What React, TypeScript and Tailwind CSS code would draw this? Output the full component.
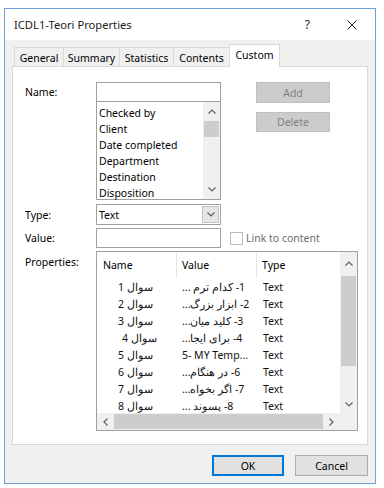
import React from "react";

const ChevUp = () => (
  <svg width="8" height="5" viewBox="0 0 8 5" className="block">
    <polyline points="0.5,4.5 4,1 7.5,4.5" fill="none" stroke="#606060" strokeWidth="1.2" />
  </svg>
);
const ChevDown = () => (
  <svg width="8" height="5" viewBox="0 0 8 5" className="block">
    <polyline points="0.5,0.5 4,4 7.5,0.5" fill="none" stroke="#606060" strokeWidth="1.2" />
  </svg>
);
const ChevLeft = () => (
  <svg width="5" height="8" viewBox="0 0 5 8" className="block">
    <polyline points="4.5,0.5 1,4 4.5,7.5" fill="none" stroke="#606060" strokeWidth="1.2" />
  </svg>
);
const ChevRight = () => (
  <svg width="5" height="8" viewBox="0 0 5 8" className="block">
    <polyline points="0.5,0.5 4,4 0.5,7.5" fill="none" stroke="#606060" strokeWidth="1.2" />
  </svg>
);

const rows = [
  { n: "سوال 1", v: "1- کدام ترم ...", extra: false },
  { n: "سوال 2", v: "2- ابزار بزرگ...", extra: false },
  { n: "سوال 3", v: "3- کلید میان...", extra: false },
  { n: "سوال 4", v: "4- برای ایجا...", extra: true },
  { n: "سوال 5", v: "5- MY Temp...", extra: false },
  { n: "سوال 6", v: "6- در هنگام...", extra: false },
  { n: "سوال 7", v: "7- اگر بخواه...", extra: false },
  { n: "سوال 8", v: "8- پسوند ...", extra: false },
];

const listItems = ["Checked by", "Client", "Date completed", "Department", "Destination", "Disposition"];

export default function App() {
  return (
    <div className="w-[384px] h-[488px] bg-white pt-[8px] pl-[4px] font-['Noto_Sans',sans-serif] text-black text-[10.5px] leading-[14px]">
      <div className="w-[372px] h-[476px] border border-[#6fa3d8] flex flex-col bg-[#f0f0f0]">
        {/* Title bar */}
        <div className="h-[31px] shrink-0 bg-white flex items-center">
          <span className="pl-[9px] text-[11.2px] text-[#1a1a1a]">ICDL1-Teori Properties</span>
          <span className="ml-auto text-[12px] text-[#222]">?</span>
          <svg width="10" height="10" viewBox="0 0 10 10" className="ml-[37px] mr-[18px]">
            <path d="M0.5 0.5 L9.5 9.5 M9.5 0.5 L0.5 9.5" stroke="#222" strokeWidth="1" />
          </svg>
        </div>

        {/* Tabs */}
        <div className="mt-[4px] h-[22px] flex items-end pl-[9px]">
          <div className="w-[49px] h-[19px] border-l border-t border-[#d9d9d9] flex items-center justify-center pt-[1px]">General</div>
          <div className="w-[56px] h-[19px] border-l border-t border-[#d9d9d9] flex items-center justify-center pt-[1px]">Summary</div>
          <div className="w-[54px] h-[19px] border-l border-t border-[#d9d9d9] flex items-center justify-center pt-[1px]">Statistics</div>
          <div className="w-[56px] h-[19px] border-l border-t border-[#d9d9d9] flex items-center justify-center pt-[1px]">Contents</div>
          <div className="relative z-10 -mb-px w-[51px] h-[23px] border-l border-t border-r border-[#d9d9d9] bg-white flex items-center justify-center pb-[2px]">Custom</div>
        </div>

        {/* Panel */}
        <div className="ml-[7px] w-[356px] h-[379px] border border-[#d9d9d9] bg-white pt-[15px]">
          {/* Name row */}
          <div className="flex items-start">
            <div className="w-[83px] pl-[12px] h-[20px] flex items-center">Name:</div>
            <div className="w-[125px] flex flex-col">
              <div className="h-[20px] border border-[#a0a0a0] bg-white"></div>
              <div className="-mt-px h-[99px] border border-[#a0a0a0] bg-white flex">
                <div className="flex-1 pl-[2px] pt-[3px]">
                  {listItems.map((t) => (
                    <div key={t} className="h-[16px] flex items-center">{t}</div>
                  ))}
                </div>
                <div className="w-[17px] bg-[#f0f0f0] flex flex-col">
                  <div className="h-[17px] flex items-center justify-center pt-[2px]"><ChevUp /></div>
                  <div className="mt-[2px] h-[16px] mx-[1px] bg-[#cdcdcd]"></div>
                  <div className="flex-1"></div>
                  <div className="h-[17px] flex items-center justify-center pb-[2px]"><ChevDown /></div>
                </div>
              </div>
            </div>
            <div className="ml-[35px] flex flex-col">
              <div className="w-[74px] h-[21px] border border-[#bfbfbf] bg-[#cccccc] text-[#838383] flex items-center justify-center">Add</div>
              <div className="mt-[9px] w-[74px] h-[20px] border border-[#bfbfbf] bg-[#cccccc] text-[#838383] flex items-center justify-center">Delete</div>
            </div>
          </div>

          {/* Type row */}
          <div className="mt-[4px] flex items-center h-[21px]">
            <div className="w-[83px] pl-[12px]">Type:</div>
            <div className="w-[125px] h-[21px] border border-[#a0a0a0] bg-white flex items-center">
              <div className="flex-1 pl-[2px]">Text</div>
              <div className="w-[17px] h-[17px] mr-[1px] bg-[#e5e5e5] border border-[#c4c4c4] flex items-center justify-center"><ChevDown /></div>
            </div>
          </div>

          {/* Value row */}
          <div className="mt-[3px] flex items-center h-[20px]">
            <div className="w-[83px] pl-[12px]">Value:</div>
            <div className="w-[125px] h-[20px] border border-[#a0a0a0] bg-white"></div>
            <div className="ml-[9px] w-[13px] h-[13px] border border-[#bcbcbc] bg-white"></div>
            <div className="ml-[3px] text-[#6d6d6d]">Link to content</div>
          </div>

          {/* Properties row */}
          <div className="mt-[3px] flex items-start">
            <div className="w-[83px] pl-[12px] pt-[4px]">Properties:</div>
            <div className="w-[262px] h-[180px] border border-[#a0a0a0] bg-white grid grid-cols-[1fr_17px] grid-rows-[1fr_17px] overflow-hidden">
              <div className="overflow-hidden">
                <div className="h-[26px] flex items-stretch">
                  <div className="w-[80px] pl-[6px] flex items-center border-r border-[#e5e5e5]">Name</div>
                  <div className="w-[80px] pl-[5px] flex items-center border-r border-[#e5e5e5]">Value</div>
                  <div className="flex-1 pl-[5px] flex items-center">Type</div>
                </div>
                {rows.map((r, i) => (
                  <div key={i} className="h-[17px] flex items-center text-[#111]">
                    <div className={`w-[80px] ${r.extra ? "pl-[25px]" : "pl-[21px]"} whitespace-nowrap overflow-hidden`}>
                      <bdi dir="rtl">{r.n}</bdi>
                    </div>
                    <div className="w-[81px] pl-[5px] whitespace-nowrap overflow-hidden">
                      <bdi dir="auto">{r.v}</bdi>
                    </div>
                    <div className="flex-1 pl-[5px]">Text</div>
                  </div>
                ))}
              </div>
              <div className="bg-[#f0f0f0] flex flex-col">
                <div className="h-[17px] flex items-center justify-center pt-[6px]"><ChevUp /></div>
                <div className="mt-[7px] h-[90px] mx-[1px] bg-[#cdcdcd]"></div>
                <div className="flex-1"></div>
                <div className="h-[17px] flex items-center justify-center"><ChevDown /></div>
              </div>
              <div className="bg-[#f0f0f0] flex items-center">
                <div className="w-[17px] flex items-center justify-center"><ChevLeft /></div>
                <div className="flex-1 h-[15px] bg-[#cdcdcd]"></div>
                <div className="w-[17px] flex items-center justify-center"><ChevRight /></div>
              </div>
              <div className="bg-[#f0f0f0]"></div>
            </div>
          </div>
        </div>

        {/* Buttons */}
        <div className="mt-[10px] flex justify-end pr-[7px]">
          <div className="w-[72px] h-[21px] border-2 border-[#0078d7] bg-[#e1e1e1] flex items-center justify-center">OK</div>
          <div className="ml-[11px] w-[73px] h-[21px] border border-[#adadad] bg-[#e1e1e1] flex items-center justify-center">Cancel</div>
        </div>
      </div>
    </div>
  );
}
